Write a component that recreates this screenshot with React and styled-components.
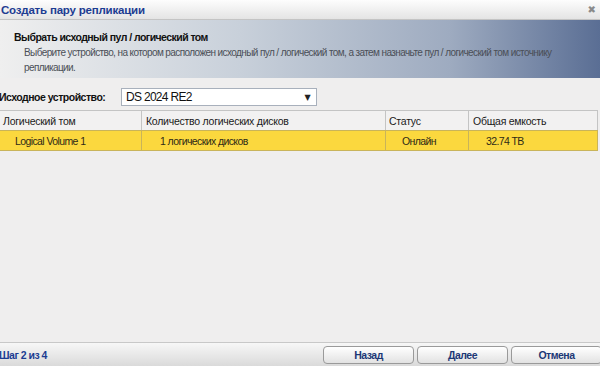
import React from "react";
import styled, { createGlobalStyle } from "styled-components";

const Global = createGlobalStyle`
  html, body {
    margin: 0;
    padding: 0;
    overflow: hidden;
  }
  body {
    font-family: "Liberation Sans", Arial, sans-serif;
  }
`;

const Window = styled.div`
  display: flex;
  flex-direction: column;
  width: 600px;
  height: 366px;
  background-color: #efeeee;
  overflow: hidden;
`;

const TitleBar = styled.div`
  display: flex;
  align-items: center;
  justify-content: space-between;
  height: 19px;
  padding: 0 4px 0 1px;
  background: linear-gradient(to bottom, #fdfdfd, #e4e4e4);
  border-bottom: 1px solid #c4c4c4;
`;

const Title = styled.div`
  font-size: 11.5px;
  font-weight: bold;
  letter-spacing: -0.2px;
  color: #1c3c92;
`;

const Close = styled.span`
  font-size: 10px;
  color: #8a8a8a;
  font-family: "DejaVu Sans", sans-serif;
`;

const Header = styled.div`
  height: 58px;
  box-sizing: border-box;
  padding: 10px 0 0 14px;
  background: linear-gradient(
    to right,
    #efefef 0%,
    #c8d0da 40%,
    #9eabc0 75%,
    #5a6e94 100%
  );
`;

const HeaderTitle = styled.div`
  font-size: 10.5px;
  font-weight: bold;
  letter-spacing: -0.55px;
  color: #111;
  line-height: 14px;
`;

const HeaderText = styled.div`
  font-size: 10px;
  letter-spacing: -0.6px;
  color: #4b4f57;
  line-height: 15px;
  padding-left: 10px;
  margin-top: 1px;
  width: 556px;
`;

const Body = styled.div`
  flex: 1;
  display: flex;
  flex-direction: column;
  padding-top: 10px;
`;

const DeviceRow = styled.div`
  display: flex;
  align-items: center;
  height: 18px;
`;

const Label = styled.div`
  width: 121px;
  font-size: 10.5px;
  font-weight: bold;
  letter-spacing: -0.5px;
  color: #111;
  text-indent: -1px;
`;

const Select = styled.div`
  display: flex;
  align-items: center;
  justify-content: space-between;
  width: 196px;
  height: 18px;
  box-sizing: border-box;
  padding: 0 6px 0 4px;
  background: #fff;
  border: 1px solid #a8b0bc;
  font-size: 12px;
  letter-spacing: -0.7px;
  color: #111;
`;

const Arrow = styled.span`
  font-size: 8px;
  color: #222;
  font-family: "DejaVu Sans", sans-serif;
`;

const Table = styled.div`
  margin-top: 4px;
  width: 598px;
  border-left: 1px solid #c4c4c4;
  margin-left: -1px;
`;

const Row = styled.div`
  display: grid;
  grid-template-columns: 142px 244px 83px 129px;
  height: ${(p) => (p.$head ? 20 : 21)}px;
  background: ${(p) => (p.$head ? "#f2f1f1" : "#fbd83e")};
  border-top: 1px solid ${(p) => (p.$head ? "#c4c4c4" : "#c9b45a")};
  border-bottom: ${(p) => (p.$head ? "none" : "1px solid #c9b45a")};
  box-sizing: border-box;
`;

const Cell = styled.div`
  display: flex;
  align-items: center;
  padding-left: ${(p) => p.$pad}px;
  border-right: 1px solid ${(p) => (p.$head ? "#c4c4c4" : "#c9b45a")};
  font-size: ${(p) => (p.$head ? 10.5 : 10.5)}px;
  letter-spacing: ${(p) => (p.$head ? -0.25 : -0.6)}px;
  color: ${(p) => (p.$head ? "#1a1a1a" : "#2e2a16")};
  white-space: nowrap;
`;

const Footer = styled.div`
  display: flex;
  align-items: center;
  justify-content: space-between;
  height: 24px;
  box-sizing: border-box;
  border-top: 1px solid #c8c8c8;
  background: linear-gradient(to bottom, #f7f7f7, #dadada);
`;

const Step = styled.div`
  font-size: 10.5px;
  font-weight: bold;
  letter-spacing: -0.5px;
  color: #1c3c92;
  text-indent: -1px;
`;

const Buttons = styled.div`
  display: flex;
  gap: 3px;
  margin-right: -2px;
`;

const Button = styled.div`
  width: 91px;
  height: 18px;
  box-sizing: border-box;
  display: flex;
  align-items: center;
  justify-content: center;
  border: 1px solid #9a9a9a;
  border-radius: 4px;
  background: linear-gradient(to bottom, #ffffff, #e2e2e2);
  font-size: 10.5px;
  font-weight: bold;
  letter-spacing: -0.5px;
  color: #1c3876;
`;

const columns = [
  { head: "Логический том", value: "Logical Volume 1", hp: 3, vp: 15 },
  { head: "Количество логических дисков", value: "1 логических дисков", hp: 4, vp: 18 },
  { head: "Статус", value: "Онлайн", hp: 3, vp: 16 },
  { head: "Общая емкость", value: "32.74 TB", hp: 4, vp: 17 },
];

export default function App() {
  return (
    <Window>
      <Global />
      <TitleBar>
        <Title>Создать пару репликации</Title>
        <Close>✖</Close>
      </TitleBar>
      <Header>
        <HeaderTitle>Выбрать исходный пул / логический том</HeaderTitle>
        <HeaderText>
          Выберите устройство, на котором расположен исходный пул / логический
          том, а затем назначьте пул / логический том источнику репликации.
        </HeaderText>
      </Header>
      <Body>
        <DeviceRow>
          <Label>Исходное устройство:</Label>
          <Select>
            DS 2024 RE2
            <Arrow>▼</Arrow>
          </Select>
        </DeviceRow>
        <Table>
          <Row $head>
            {columns.map((c) => (
              <Cell $head $pad={c.hp} key={c.head}>
                {c.head}
              </Cell>
            ))}
          </Row>
          <Row>
            {columns.map((c) => (
              <Cell $pad={c.vp} key={c.head}>
                {c.value}
              </Cell>
            ))}
          </Row>
        </Table>
      </Body>
      <Footer>
        <Step>Шаг 2 из 4</Step>
        <Buttons>
          <Button>Назад</Button>
          <Button>Далее</Button>
          <Button>Отмена</Button>
        </Buttons>
      </Footer>
    </Window>
  );
}
